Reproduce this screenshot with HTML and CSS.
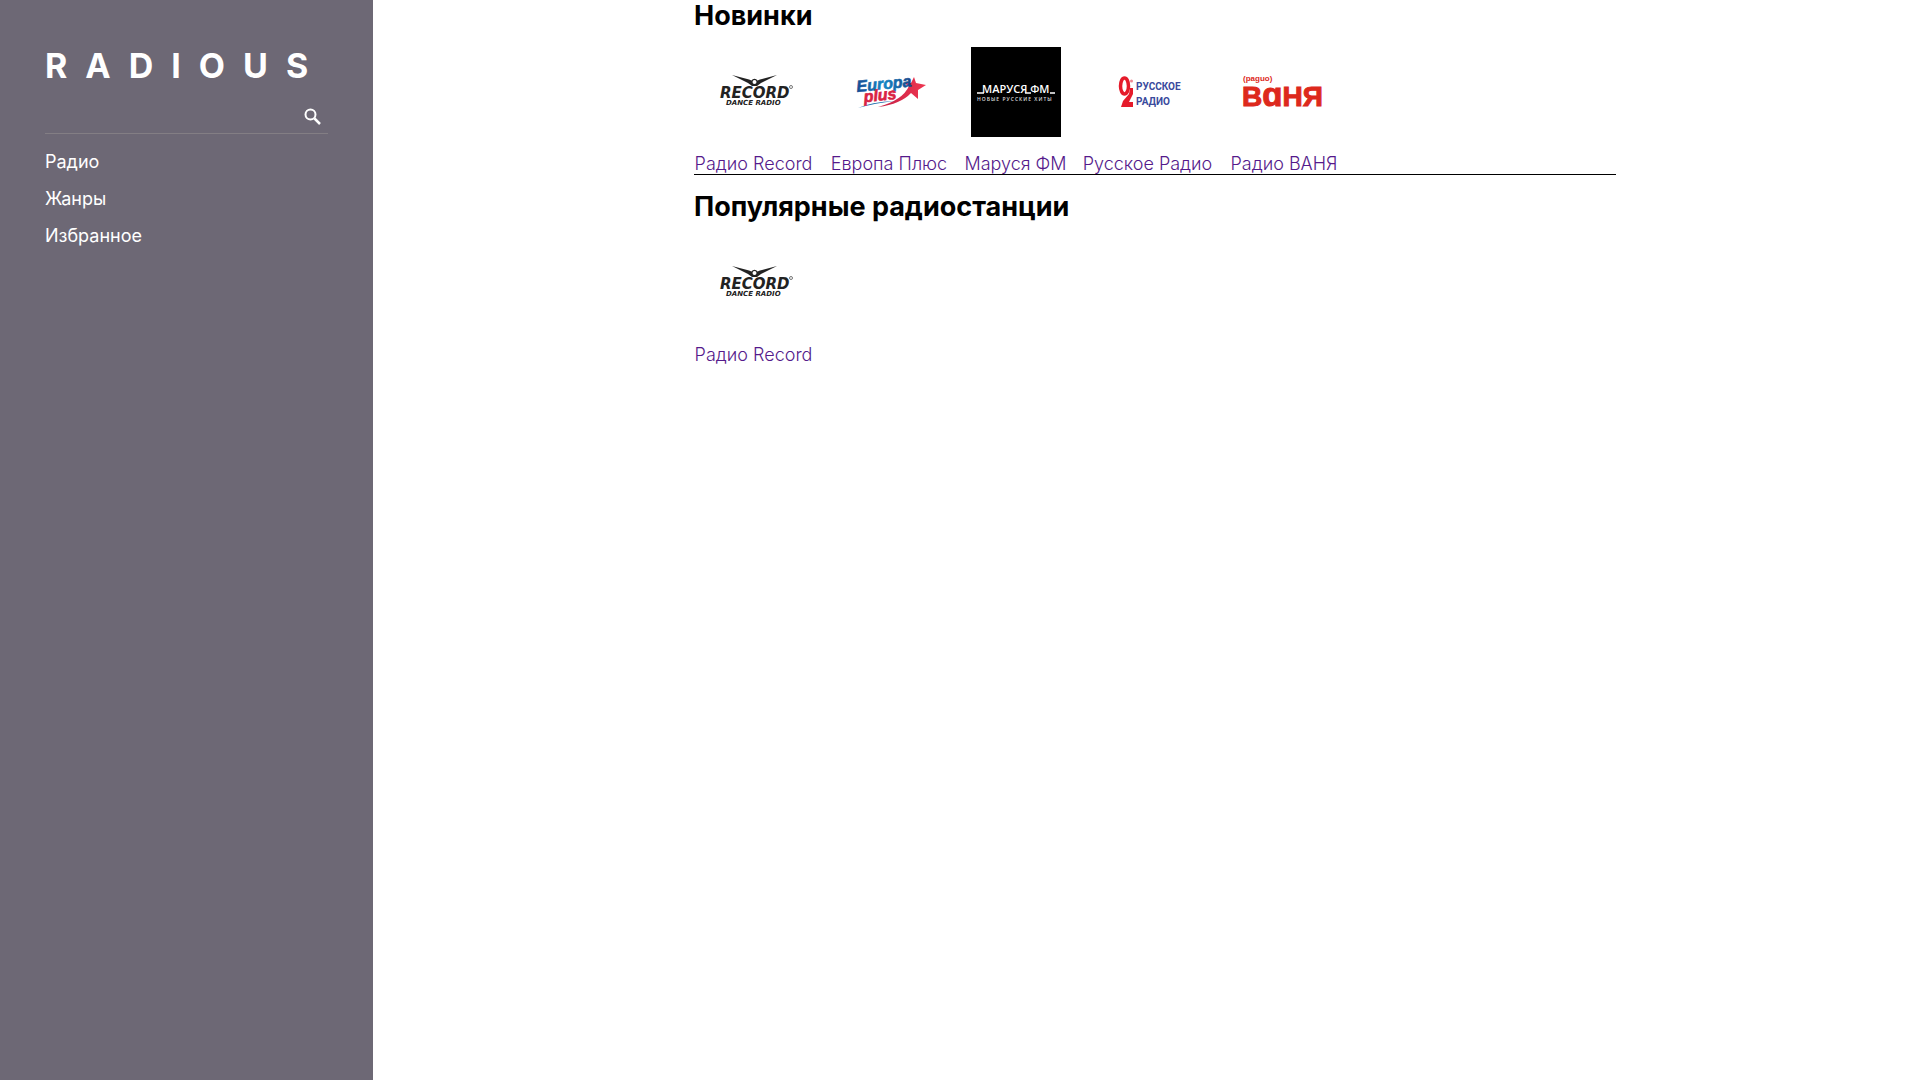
FILE: index.html
```html
<!DOCTYPE html>
<html lang="ru">
<head>
<meta charset="utf-8">
<meta name="viewport" content="width=device-width, initial-scale=1">
<title>Radious</title>
<link rel="stylesheet" href="styles.css">
</head>
<body>
<svg class="defs" aria-hidden="true">
  <symbol id="record" viewBox="0 0 90 90">
    <path fill="#222" d="M23 28 40 32.500 42.500 33.500A3.500 3.500 0 0 1 48.500 33.500L51 32.500 68 28 52 36 48 39H43L39 36ZM45.500 33A2 2 0 1 0 45.500 37 2 2 0 1 0 45.500 33Z" fill-rule="evenodd"/>
    <text class="logo-wide" x="11" y="51" font-size="15" fill="#222">RECORD</text>
    <text class="logo-wide" x="17" y="58" font-size="7" fill="#222">DANCE RADIO</text>
    <circle cx="82" cy="40" r="1.500" fill="none" stroke="#777"/>
  </symbol>
</svg>
<div class="layout">
  <aside class="sidebar">
    <h1 class="brand">RADIOUS</h1>
    <form class="search">
      <input class="search-input" type="search" aria-label="Поиск">
      <button class="search-button" type="button" aria-label="Найти">
        <svg class="search-icon" viewBox="0 0 18 18" fill="none" stroke="#fff"><circle cx="6.500" cy="6.500" r="5" stroke-width="2"/><path d="m10.500 10.500 5.500 5.500" stroke-width="2.500"/></svg>
      </button>
    </form>
    <nav class="menu">
      <a href="#radio">Радио</a>
      <a href="#genres">Жанры</a>
      <a href="#favorites">Избранное</a>
    </nav>
  </aside>
  <main class="content">
    <section class="group group-new">
      <h2 class="title">Новинки</h2>
      <div class="stations">
        <a class="station" href="#record"><svg class="logo"><use href="#record"/></svg><span>Радио Record</span></a>
        <a class="station" href="#europa">
          <svg class="logo" viewBox="0 0 90 90">
            <defs>
              <linearGradient id="red"><stop stop-color="#c51f45"/><stop offset="1" stop-color="#ee3650"/></linearGradient>
              <linearGradient id="blue"><stop stop-color="#164a92"/><stop offset=".5" stop-color="#1487c4"/><stop offset="1" stop-color="#174488"/></linearGradient>
            </defs>
            <path fill="url(#red)" d="M34 60Q59 53 65 39L59 36 67 36 70 30 72 36 82 38 74 43 74 52 67 46Q57 57 34 60Z"/>
            <path fill="#1569a9" d="M14 61Q27 55 51 54 31 56 14 61Z"/>
            <g transform="rotate(-6 13 44)">
              <text class="logo-slant" x="13" y="45" font-size="16" fill="url(#blue)" stroke="url(#blue)" stroke-width=".6">Europa</text>
              <text class="logo-slant" x="19" y="56" font-size="16" fill="#d92343" stroke="#d92343" stroke-width=".6">plus</text>
            </g>
          </svg><span>Европа Плюс</span></a>
        <a class="station" href="#marusya">
          <svg class="logo" viewBox="0 0 90 90">
            <path d="M0 0H90V90H0Z"/>
            <path d="M6 46H13M54 46H60M79 46H84" stroke="#fff" stroke-width="1.500"/>
            <text class="logo-hand" x="11" y="46" font-size="11" fill="#fff">МАРУСЯ ФМ</text>
            <text class="logo-hand logo-spaced" x="6" y="54" font-size="5" fill="#ddd">НОВЫЕ РУССКИЕ ХИТЫ</text>
          </svg><span>Маруся ФМ</span></a>
        <a class="station" href="#russkoe">
          <svg class="logo" viewBox="0 0 90 90">
            <ellipse cx="21.500" cy="39" rx="4" ry="8" fill="none" stroke="#e51b2b" stroke-width="3.500"/>
            <path fill="#e51b2b" d="M27 41H30V47L26 55H30V60H18L20 54 26 47Z"/>
            <circle cx="28.500" cy="34" r="1.500" fill="#ef8791"/>
            <text class="logo-narrow" x="33" y="43" font-size="10" fill="#3a4a9d">РУССКОЕ</text>
            <text class="logo-narrow" x="33" y="58" font-size="10" fill="#3a4a9d">РАДИО</text>
          </svg><span>Русское Радио</span></a>
        <a class="station" href="#vanya">
          <svg class="logo" viewBox="0 0 90 90" fill="#dd291c" stroke="#dd291c">
            <text class="logo-bold" x="4" y="34" font-size="8" stroke="none">(paguo)</text>
            <text class="logo-bold" x="3" y="59" font-size="28" stroke-width="1">В<tspan font-size="33">ɑ</tspan>НЯ</text>
          </svg><span>Радио ВАНЯ</span></a>
      </div>
    </section>
    <section class="group">
      <h2 class="title">Популярные радиостанции</h2>
      <div class="stations">
        <a class="station" href="#record"><svg class="logo"><use href="#record"/></svg><span>Радио Record</span></a>
      </div>
    </section>
  </main>
</div>
</body>
</html>
```
FILE: styles.css
```css
* { box-sizing: border-box; }
body {
  margin: 0;
  background: #fff;
  color: #000;
  font-family: Inter, "Noto Sans", sans-serif;
  font-size: 18px;
  line-height: 20px;
}
a { text-decoration: none; }
.defs { display: none; }
.layout {
  display: grid;
  grid-template-columns: 373px 321fr 922fr 304fr;
  min-height: 100vh;
}
.sidebar {
  padding: 45px;
  background: #6d6875;
  color: #fff;
}
.brand {
  margin: 0;
  font-size: 34px;
  line-height: 42px;
  font-weight: 700;
  letter-spacing: 18px;
  white-space: nowrap;
}
.search {
  display: flex;
  align-items: center;
  height: 47px;
  padding: 14px 6px 0 0;
  border-bottom: 1px solid #837e84;
}
.search-input {
  flex: 1;
  min-width: 0;
  border: 0;
  outline: 0;
  background: transparent;
  color: inherit;
  font: inherit;
}
.search-button {
  padding: 0;
  border: 0;
  background: transparent;
}
.search-icon {
  display: block;
  width: 18px;
  height: 18px;
}
.menu {
  display: grid;
  justify-items: start;
  gap: 17px;
  padding-top: 18px;
}
.menu a { color: #fff; }
.content {
  grid-column: 3;
  display: flex;
  flex-direction: column;
  gap: 16px;
}
.group-new { border-bottom: 1px solid #000; }
.title {
  margin: 0 0 16px;
  font-size: 27px;
  line-height: 31px;
  font-weight: 700;
}
.stations {
  display: grid;
  grid-template-columns: 119px 118px 101px 129px 110px;
  gap: 17px;
}
.station {
  display: flex;
  flex-direction: column;
  align-items: center;
  gap: 17px;
  color: #551a8b;
  font-weight: 300;
  white-space: nowrap;
}
.logo {
  width: 90px;
  height: 90px;
}
.logo-wide { font-family: "DejaVu Sans", sans-serif; font-style: italic; font-weight: 700; }
.logo-slant { font-family: "Liberation Sans", sans-serif; font-style: italic; font-weight: 700; }
.logo-hand { font-family: "Open Sans", sans-serif; font-weight: 600; }
.logo-spaced { letter-spacing: 1px; }
.logo-narrow { font-family: Roboto, sans-serif; font-weight: 700; }
.logo-bold { font-family: "Liberation Sans", sans-serif; font-weight: 700; }
```
